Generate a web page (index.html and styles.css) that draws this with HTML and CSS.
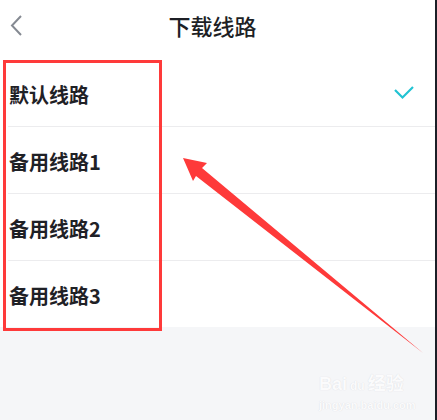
FILE: index.html
```html
<!DOCTYPE html>
<html lang="zh-CN">
<head>
  <meta charset="UTF-8">
  <title>下载线路</title>
  <link rel="stylesheet" href="styles.css">
</head>
<body>
  <div class="phone">
    <div class="app">
      <div class="header">
        <svg class="back" width="14" height="22" viewBox="0 0 14 22">
          <polyline points="11,1 2,10.5 11,20" fill="none" stroke="#858a92" stroke-width="2"/>
        </svg>
        <div class="title">下载线路</div>
      </div>
      <ul class="lines">
        <li class="line">
          <span>默认线路</span>
          <svg class="check" width="22" height="16" viewBox="0 0 22 16">
            <polyline points="2,5 9.5,12.5 20,2" fill="none" stroke="#22c3d3" stroke-width="2.2"/>
          </svg>
        </li>
        <li class="line"><span>备用线路1</span></li>
        <li class="line"><span>备用线路2</span></li>
        <li class="line last"><span>备用线路3</span></li>
      </ul>
      <div class="watermark">
        <div class="wm-logo">Bai<span class="paw">du</span>经验</div>
        <div class="wm-url">jingyan.baidu.com</div>
      </div>
    </div>
    <div class="edge"></div>
  </div>

  <!-- annotation drawn over the screenshot -->
  <div class="mark"></div>
  <svg class="arrow" width="437" height="420" viewBox="0 0 437 420">
    <polygon points="183,158 207,163 202,168 423,353 196,176 193,181" fill="#fe3a3a"/>
  </svg>
</body>
</html>
```

FILE: styles.css
```css
body {
  margin: 0;
  font-family: "Noto Sans CJK SC", "Noto Sans", sans-serif;
  background: #f5f6f8;
}
.phone {
  display: flex;
  width: 437px;
  height: 420px;
  overflow: hidden;
}
.app {
  flex: 1;
  background: #f5f6f8;
  position: relative;
}
.edge {
  width: 2px;
  background: #1b1f27;
}
.header {
  height: 60px;
  background: #fff;
  position: relative;
}
.back {
  position: absolute;
  left: 10px;
  top: 15px;
}
.title {
  text-align: center;
  padding-right: 10px;
  line-height: 50px;
  font-size: 22px;
  font-weight: 500;
  color: #1d1f25;
}
.lines {
  list-style: none;
  margin: 0;
  padding: 0 0 0 8px;
  background: #fff;
}
.line {
  height: 67px;
  display: flex;
  align-items: center;
  justify-content: space-between;
  padding: 2px 20px 0 1px;
  box-sizing: border-box;
  border-bottom: 1px solid #ececee;
  font-size: 20px;
  font-weight: 700;
  color: #1f2126;
}
.line.last {
  height: 66px;
  border-bottom: none;
}
.check {
  margin-top: -2px;
}
.watermark {
  position: absolute;
  left: 319px;
  top: 374px;
  color: #fbfbfc;
  text-shadow: 0 0 1px #d6d7dc;
  font-family: "Liberation Sans", "Noto Sans CJK SC", sans-serif;
  font-weight: 700;
}
.wm-logo {
  font-size: 18px;
  line-height: 20px;
}
.paw {
  font-size: 12px;
  padding: 0 3px;
}
.wm-url {
  font-size: 11px;
  line-height: 12px;
  margin-top: 3px;
}
.mark {
  position: absolute;
  left: 3px;
  top: 60px;
  width: 159px;
  height: 271px;
  box-sizing: border-box;
  border: 3px solid #fe3a3a;
}
.arrow {
  position: absolute;
  left: 0;
  top: 0;
}
```
